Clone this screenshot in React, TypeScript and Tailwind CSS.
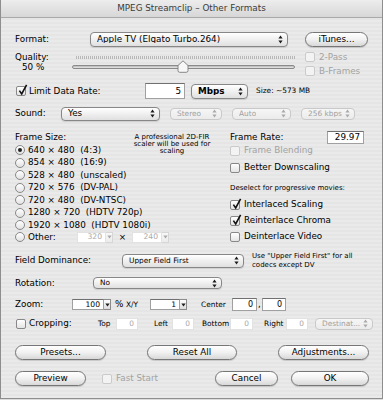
import React from "react";

function UpDown({ dim }: { dim?: boolean }) {
  return (
    <svg width="5" height="9" viewBox="0 0 5 9" className="shrink-0">
      <path d="M2.5 0.6L4.6 3.6H0.4Z M2.5 8.4L4.6 5.4H0.4Z" fill={dim ? "#a9a9a9" : "#1c1c1c"} />
    </svg>
  );
}

function Popup({
  label,
  className,
  dim,
  bold,
  small,
}: {
  label: string;
  className: string;
  dim?: boolean;
  bold?: boolean;
  small?: boolean;
}) {
  return (
    <div
      className={`flex shrink-0 items-center justify-between rounded-[4px] border pl-[6px] pr-[4px] bg-linear-to-b ${
        dim
          ? "border-[#c9c9c9] from-[#f6f6f6] to-[#ebebeb] text-[#a0a0a0]"
          : "border-[#878787] from-white to-[#e0e0e0] text-black shadow-[0_1px_1px_rgba(0,0,0,0.12)]"
      } ${small ? "text-[7.4px]" : ""} ${bold ? "font-bold" : ""} ${className}`}
    >
      <span className="truncate">{label}</span>
      <UpDown dim={dim} />
    </div>
  );
}

function Btn({ label, className }: { label: string; className: string }) {
  return (
    <div
      className={`flex shrink-0 items-center justify-center rounded-full border border-[#767676] bg-linear-to-b from-white via-[#f1f1f1] to-[#d8d8d8] shadow-[0_1px_1px_rgba(0,0,0,0.15)] ${className}`}
    >
      {label}
    </div>
  );
}

function Check({ checked, dim }: { checked?: boolean; dim?: boolean }) {
  return (
    <span
      className={`relative shrink-0 w-[10px] h-[10px] rounded-[2px] border ${
        dim ? "border-[#cacaca] bg-[#f3f3f3]" : "border-[#888] bg-linear-to-b from-white to-[#e4e4e4]"
      }`}
    >
      {checked && (
        <svg className="absolute left-[1px] top-[-3px]" width="10" height="12" viewBox="0 0 10 12">
          <path d="M1.4 6.6L3.7 10L8.6 0.8" stroke="#111" strokeWidth="1.6" fill="none" />
        </svg>
      )}
    </span>
  );
}

function CheckRow({
  label,
  checked,
  dim,
  className,
}: {
  label: string;
  checked?: boolean;
  dim?: boolean;
  className: string;
}) {
  return (
    <div className={`flex items-center ${className}`}>
      <Check checked={checked} dim={dim} />
      <span className={`ml-[4px] whitespace-nowrap ${dim ? "text-[#a3a3a3]" : ""}`}>{label}</span>
    </div>
  );
}

function RadioDot({ on }: { on?: boolean }) {
  return (
    <span className="flex shrink-0 items-center justify-center w-[10px] h-[10px] rounded-full border border-[#888] bg-linear-to-b from-white to-[#e2e2e2]">
      {on && <span className="w-[4px] h-[4px] rounded-full bg-[#222]" />}
    </span>
  );
}

function Radio({ on, label }: { on?: boolean; label: string }) {
  return (
    <div className="flex items-center h-[12.5px]">
      <RadioDot on={on} />
      <span className="ml-[3px] whitespace-pre">{label}</span>
    </div>
  );
}

function Field({ value, className, dim }: { value: string; className: string; dim?: boolean }) {
  return (
    <div
      className={`flex shrink-0 items-center justify-end pr-[3px] bg-white border ${
        dim ? "border-[#e2e2e2] text-[#a8a8a8]" : "border-[#a0a0a0] border-t-[#707070] text-black"
      } ${className}`}
    >
      {value}
    </div>
  );
}

function Combo({ value, fieldClass, dim }: { value: string; fieldClass: string; dim?: boolean }) {
  return (
    <div className="flex shrink-0 h-[11px] text-[7.6px]">
      <Field value={value} className={`h-full ${fieldClass}`} dim={dim} />
      <div
        className={`flex items-center justify-center w-[7px] h-full border border-l-0 bg-linear-to-b ${
          dim ? "border-[#d6d6d6] from-[#f8f8f8] to-[#ececec]" : "border-[#8c8c8c] from-white to-[#dcdcdc]"
        }`}
      >
        <svg width="5" height="4" viewBox="0 0 5 4">
          <path d="M0.3 0.5H4.7L2.5 3.6Z" fill={dim ? "#aaa" : "#222"} />
        </svg>
      </div>
    </div>
  );
}

export default function App() {
  return (
    <div className="w-[383px] h-[400px] bg-[#dcdcdc] font-['DejaVu_Sans',sans-serif] text-[8.8px] leading-none text-black">
      <div className="h-[399px] border-x border-b border-[#8e8e8e] bg-[#e8e8e8] bg-[image:repeating-linear-gradient(180deg,#eaeaea_0px,#eaeaea_2px,#e5e5e5_2px,#e5e5e5_4px)]">
        {/* title bar */}
        <div className="h-[18px] flex items-center justify-center border-b border-[#a9a9a9] bg-linear-to-b from-[#ededed] to-[#d7d7d7] text-[#3b3b3b]">
          MPEG Streamclip – Other Formats
        </div>

        <div className="pl-[14px]">
          {/* Format */}
          <div className="flex items-center h-[16px] mt-[13px]">
            <span className="w-[75px]">Format:</span>
            <Popup label="Apple TV (Elgato Turbo.264)" className="w-[198px] h-[15px]" />
            <Btn label="iTunes..." className="ml-[17px] w-[63px] h-[15px]" />
          </div>

          {/* Quality */}
          <div className="flex h-[26px] mt-[4px]">
            <div className="w-[57px] flex flex-col">
              <span className="mt-[2px] h-[9px] leading-[9px]">Quality:</span>
              <span className="mt-[1px] pl-[7px] h-[9px] leading-[9px]">50 %</span>
            </div>
            <div className="relative w-[223px] pt-[5px]">
              <div className="ml-[4px] h-[3px] bg-[image:repeating-linear-gradient(90deg,#a3a3a3_0px,#a3a3a3_1px,transparent_1px,transparent_2px)] opacity-70" />
              <div className="mt-[6px] h-[4px] rounded-full border border-[#8a8a8a] bg-linear-to-b from-[#b9b9b9] to-[#e9e9e9]" />
              <svg className="absolute left-[105px] top-[9px]" width="12" height="13" viewBox="0 0 12 13">
                <path
                  d="M1 5.5L6 0.8L11 5.5V10.5Q11 12.3 9.2 12.3H2.8Q1 12.3 1 10.5Z"
                  fill="#f7f7f7"
                  stroke="#7b7b7b"
                  strokeWidth="0.9"
                />
              </svg>
            </div>
            <div className="ml-[10px] flex flex-col">
              <CheckRow label="2-Pass" dim className="mt-[1px] h-[10px]" />
              <CheckRow label="B-Frames" dim className="mt-[4px] h-[10px]" />
            </div>
          </div>

          {/* Limit Data Rate */}
          <div className="flex items-center h-[16px] mt-[6px]">
            <div className="w-[130px] flex items-center pl-[1px]">
              <Check checked />
              <span className="ml-[3px]">Limit Data Rate:</span>
            </div>
            <Field value="5" className="w-[40px] h-[16px]" />
            <Popup label="Mbps" bold className="ml-[6px] w-[57px] h-[15px]" />
            <span className="ml-[8px] text-[7.4px]">Size: ~573 MB</span>
          </div>

          {/* Sound */}
          <div className="flex items-center h-[15px] mt-[7px]">
            <span className="w-[46px]">Sound:</span>
            <Popup label="Yes" className="w-[99px] h-[14px]" />
            <Popup label="Stereo" dim small className="ml-[10px] w-[52px] h-[12px]" />
            <Popup label="Auto" dim small className="ml-[10px] w-[59px] h-[12px]" />
            <Popup label="256 kbps" dim small className="ml-[10px] w-[54px] h-[12px]" />
          </div>

          {/* Frame section */}
          <div className="flex mt-[9px]">
            <div className="w-[118px] shrink-0 flex flex-col">
              <div className="h-[14px] flex items-center">Frame Size:</div>
              <Radio on label="640 × 480  (4:3)" />
              <Radio label="854 × 480  (16:9)" />
              <Radio label="528 × 480  (unscaled)" />
              <Radio label="720 × 576  (DV-PAL)" />
              <Radio label="720 × 480  (DV-NTSC)" />
              <Radio label="1280 × 720  (HDTV 720p)" />
              <Radio label="1920 × 1080  (HDTV 1080i)" />
              <div className="flex items-center h-[11.5px] whitespace-nowrap">
                <RadioDot />
                <span className="ml-[3px] w-[49px] shrink-0">Other:</span>
                <Combo value="320" fieldClass="w-[29px]" dim />
                <span className="w-[19px] shrink-0 text-center">×</span>
                <Combo value="240" fieldClass="w-[30px]" dim />
              </div>
            </div>

            <div className="w-[78px] shrink-0 pt-[4px] text-center text-[7px] leading-[6.8px]">
              A professional 2D-FIR
              <br />
              scaler will be used for
              <br />
              scaling
            </div>

            <div className="ml-[19px] w-[138px] shrink-0 flex flex-col">
              <div className="flex items-center h-[14px]">
                <span className="w-[97px]">Frame Rate:</span>
                <Field value="29.97" className="w-[37px] h-[13px]" />
              </div>
              <CheckRow label="Frame Blending" dim className="h-[13px]" />
              <CheckRow label="Better Downscaling" className="mt-[4px] h-[13px]" />
              <div className="mt-[8px] h-[12px] flex items-center text-[7px]">
                Deselect for progressive movies:
              </div>
              <CheckRow label="Interlaced Scaling" checked className="mt-[4px] h-[13px]" />
              <CheckRow label="Reinterlace Chroma" checked className="mt-[3px] h-[13px]" />
              <CheckRow label="Deinterlace Video" className="mt-[3px] h-[13px]" />
            </div>
          </div>

          {/* Field Dominance */}
          <div className="flex items-center h-[15px] mt-[10px]">
            <span className="w-[107px]">Field Dominance:</span>
            <Popup label="Upper Field First" small className="w-[122px] h-[14px]" />
            <span className="ml-[8px] text-[7px] leading-[8.3px]">
              Use "Upper Field First" for all
              <br />
              codecs except DV
            </span>
          </div>

          {/* Rotation */}
          <div className="flex items-center h-[12px] mt-[9px]">
            <span className="w-[78px]">Rotation:</span>
            <Popup label="No" small className="w-[129px] h-[12px]" />
          </div>

          {/* Zoom */}
          <div className="flex items-center h-[13px] mt-[9px]">
            <span className="w-[57px]">Zoom:</span>
            <Combo value="100" fieldClass="w-[32px]" />
            <span className="ml-[4px] w-[11px]">%</span>
            <span className="w-[24px] text-[7.4px]">X/Y</span>
            <Combo value="1" fieldClass="w-[30px]" />
            <span className="ml-[14px] w-[31px] text-[7.4px]">Center</span>
            <Field value="0" className="w-[25px] h-[13px] text-[8px]" />
            <span className="w-[5px] text-center">,</span>
            <Field value="0" className="w-[24px] h-[13px] text-[8px]" />
          </div>

          {/* Cropping */}
          <div className="flex items-center h-[13px] mt-[6px] text-[7.4px]">
            <div className="w-[83px] flex items-center pl-[1px] text-[8.8px]">
              <Check />
              <span className="ml-[3px]">Cropping:</span>
            </div>
            <span className="w-[18px]">Top</span>
            <Field value="0" dim className="w-[22px] h-[12px]" />
            <span className="ml-[16px] w-[18px]">Left</span>
            <Field value="0" dim className="w-[22px] h-[12px]" />
            <span className="ml-[8px] w-[28px]">Bottom</span>
            <Field value="0" dim className="w-[23px] h-[12px]" />
            <span className="ml-[11px] w-[22px]">Right</span>
            <Field value="0" dim className="w-[22px] h-[12px]" />
            <Popup label="Destinat..." dim small className="ml-[7px] w-[58px] h-[12px]" />
          </div>

          {/* Buttons */}
          <div className="flex items-center h-[15px] mt-[15px]">
            <Btn label="Presets..." className="w-[91px] h-[15px]" />
            <Btn label="Reset All" className="ml-[41px] w-[90px] h-[15px]" />
            <Btn label="Adjustments..." className="ml-[41px] w-[91px] h-[15px]" />
          </div>
          <div className="flex items-center h-[15px] mt-[11px]">
            <Btn label="Preview" className="w-[71px] h-[15px]" />
            <div className="ml-[16px] w-[113px] flex items-center">
              <Check dim />
              <span className="ml-[4px] text-[#a3a3a3]">Fast Start</span>
            </div>
            <Btn label="Cancel" className="w-[63px] h-[15px]" />
            <Btn label="OK" className="ml-[13px] w-[78px] h-[15px]" />
          </div>
        </div>
      </div>
    </div>
  );
}
